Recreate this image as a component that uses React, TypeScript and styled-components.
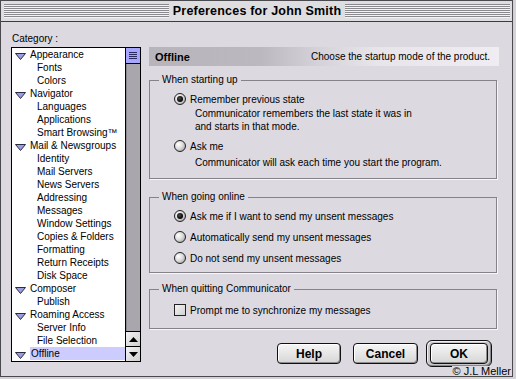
import React from "react";
import styled, { createGlobalStyle, css } from "styled-components";

const GlobalStyle = createGlobalStyle`
  html, body {
    margin: 0;
    padding: 0;
    background: #d4d2d6;
  }
  body {
    font-family: "Liberation Sans", Arial, sans-serif;
    font-size: 10px;
    color: #000;
  }
`;

interface Category {
  label: string;
  parent?: boolean;
  selected?: boolean;
}

const categories: Category[] = [
  { label: "Appearance", parent: true },
  { label: "Fonts" },
  { label: "Colors" },
  { label: "Navigator", parent: true },
  { label: "Languages" },
  { label: "Applications" },
  { label: "Smart Browsing™" },
  { label: "Mail & Newsgroups", parent: true },
  { label: "Identity" },
  { label: "Mail Servers" },
  { label: "News Servers" },
  { label: "Addressing" },
  { label: "Messages" },
  { label: "Window Settings" },
  { label: "Copies & Folders" },
  { label: "Formatting" },
  { label: "Return Receipts" },
  { label: "Disk Space" },
  { label: "Composer", parent: true },
  { label: "Publish" },
  { label: "Roaming Access", parent: true },
  { label: "Server Info" },
  { label: "File Selection" },
  { label: "Offline", parent: true, selected: true },
];

function Disclosure() {
  return (
    <svg width="11" height="7" viewBox="0 0 11 7">
      <polygon points="0.5,0.5 10.5,0.5 5.5,6.5" fill="#9c9ce0" stroke="#2a2a40" strokeWidth="1" />
    </svg>
  );
}

function Arrow({ up }: { up?: boolean }) {
  return (
    <svg width="9" height="5" viewBox="0 0 9 5">
      <polygon points={up ? "0,5 9,5 4.5,0" : "0,0 9,0 4.5,5"} fill="#000" />
    </svg>
  );
}

export default function App() {
  return (
    <>
      <GlobalStyle />
      <Window>
        <TitleBar>
          <Stripes />
          <Title>Preferences for John Smith</Title>
          <Stripes />
        </TitleBar>
        <Body>
          <Sidebar>
            <CategoryLabel>Category :</CategoryLabel>
            <ListBox>
              <ListItems>
                {categories.map((c) => (
                  <Row key={c.label} $parent={c.parent}>
                    {c.parent && <Disclosure />}
                    <RowText $selected={c.selected}>{c.label}</RowText>
                  </Row>
                ))}
              </ListItems>
              <ScrollBar>
                <Thumb>
                  <GripLine />
                  <GripLine />
                  <GripLine />
                  <GripLine />
                </Thumb>
                <Track />
                <ArrowButton>
                  <Arrow up />
                </ArrowButton>
                <ArrowButton>
                  <Arrow />
                </ArrowButton>
              </ScrollBar>
            </ListBox>
          </Sidebar>

          <Main>
            <Header>
              <HeaderTitle>Offline</HeaderTitle>
              <HeaderHint>Choose the startup mode of the product.</HeaderHint>
            </Header>

            <Group $top={8} $pt={6} $pb={9}>
              <Legend>When starting up</Legend>
              <Option>
                <Radio $on />
                <span>Remember previous state</span>
              </Option>
              <Description $gap={1}>
                Communicator remembers the last state it was in
                <br />
                and starts in that mode.
              </Description>
              <Option $gap={6}>
                <Radio />
                <span>Ask me</span>
              </Option>
              <Description $gap={3}>Communicator will ask each time you start the program.</Description>
            </Group>

            <Group $top={12} $pt={6} $pb={7}>
              <Legend>When going online</Legend>
              <Option>
                <Radio $on />
                <span>Ask me if I want to send my unsent messages</span>
              </Option>
              <Option $gap={7}>
                <Radio />
                <span>Automatically send my unsent messages</span>
              </Option>
              <Option $gap={7}>
                <Radio />
                <span>Do not send my unsent messages</span>
              </Option>
            </Group>

            <Group $top={10} $pt={8} $pb={11}>
              <Legend>When quitting Communicator</Legend>
              <Option>
                <CheckBox />
                <span>Prompt me to synchronize my messages</span>
              </Option>
            </Group>

            <ButtonRow>
              <PushButton $width={64}>Help</PushButton>
              <PushButton $width={65}>Cancel</PushButton>
              <DefaultRing>
                <PushButton $width={58}>OK</PushButton>
              </DefaultRing>
            </ButtonRow>
          </Main>
        </Body>
        <Credit>© J.L Meller</Credit>
      </Window>
    </>
  );
}

const Window = styled.div`
  position: relative;
  width: 513px;
  height: 377px;
  box-sizing: border-box;
  border: 1px solid #4a4a4e;
  background: #dcd9e1;
  overflow: hidden;
`;

const TitleBar = styled.div`
  height: 20px;
  display: flex;
  align-items: center;
  gap: 4px;
  padding: 0 2px 0 3px;
  background: #dedde0;
  border-bottom: 1px solid #3c3c40;
`;

const Stripes = styled.div`
  flex: 1;
  height: 14px;
  background: repeating-linear-gradient(
    to bottom,
    #8a8a8e 0px,
    #8a8a8e 1px,
    #f4f4f4 1px,
    #f4f4f4 2px
  );
`;

const Title = styled.div`
  font-family: "Liberation Sans", Arial, sans-serif;
  font-weight: bold;
  font-size: 12.5px;
  letter-spacing: 0.2px;
  white-space: nowrap;
`;

const Body = styled.div`
  display: grid;
  grid-template-columns: 130px 350px;
  column-gap: 8px;
  padding: 11px 0 0 10px;
`;

const Sidebar = styled.div`
  display: flex;
  flex-direction: column;
`;

const CategoryLabel = styled.div`
  height: 12px;
  line-height: 12px;
  margin-bottom: 2px;
  padding-left: 1px;
`;

const ListBox = styled.div`
  display: flex;
  height: 315px;
  box-sizing: border-box;
  border: 1px solid #000;
  background: #fff;
`;

const ListItems = styled.div`
  flex: 1;
  display: flex;
  flex-direction: column;
`;

const Row = styled.div<{ $parent?: boolean }>`
  height: 13px;
  display: flex;
  align-items: center;
  gap: 4px;
  padding-left: ${(p) => (p.$parent ? "3px" : "25px")};
  white-space: nowrap;

  svg {
    margin-top: 3px;
    flex: none;
  }
`;

const RowText = styled.span<{ $selected?: boolean }>`
  line-height: 13px;
  ${(p) =>
    p.$selected &&
    css`
      flex: 1;
      background: #ccccff;
      padding-left: 1px;
    `}
`;

const ScrollBar = styled.div`
  width: 14px;
  display: flex;
  flex-direction: column;
  border-left: 1px solid #000;
  background: #aaa6ae;
`;

const Thumb = styled.div`
  height: 16px;
  box-sizing: border-box;
  border-bottom: 1px solid #000;
  background: #a6a6ff;
  display: flex;
  flex-direction: column;
  justify-content: center;
  gap: 1px;
  padding: 0 3px;
`;

const GripLine = styled.div`
  height: 1px;
  background: #2a2a60;
`;

const Track = styled.div`
  flex: 1;
  box-shadow: inset 1px 0 0 #8d8991;
`;

const ArrowButton = styled.div`
  height: 15px;
  box-sizing: border-box;
  border-top: 1px solid #000;
  background: linear-gradient(135deg, #f2f2f2, #cfcfcf);
  display: flex;
  align-items: center;
  justify-content: center;
`;

const Main = styled.div`
  display: flex;
  flex-direction: column;
  margin-top: 14px;
`;

const Header = styled.div`
  height: 19px;
  display: flex;
  align-items: center;
  justify-content: space-between;
  padding: 0 9px 0 6px;
  background: linear-gradient(
    90deg,
    #b8b4bc 0%,
    #bcb8c0 32%,
    #d4d1d8 48%,
    #e8e5ea 65%,
    #efedf1 100%
  );
`;

const HeaderTitle = styled.span`
  font-weight: bold;
  font-size: 11px;
`;

const HeaderHint = styled.span`
  font-size: 10px;
`;

const Group = styled.fieldset<{ $top: number; $pt: number; $pb: number }>`
  margin: ${(p) => p.$top}px 2px 0 0;
  padding: ${(p) => p.$pt}px 0 ${(p) => p.$pb}px 24px;
  border: 1px solid #85828a;
  box-shadow: 1px 1px 0 #f6f5f8;
  min-width: 0;
  display: flex;
  flex-direction: column;
`;

const Legend = styled.legend`
  margin-left: -15px;
  padding: 0 3px;
  height: 12px;
  line-height: 12px;
`;

const Option = styled.div<{ $gap?: number }>`
  display: flex;
  align-items: center;
  gap: 4px;
  height: 14px;
  margin-top: ${(p) => p.$gap ?? 0}px;
`;

const Description = styled.div<{ $gap?: number }>`
  padding-left: 21px;
  line-height: 13px;
  margin-top: ${(p) => p.$gap ?? 0}px;
`;

const Radio = styled.span<{ $on?: boolean }>`
  position: relative;
  width: 12px;
  height: 12px;
  box-sizing: border-box;
  border-radius: 50%;
  border: 1px solid #222;
  background: radial-gradient(circle at 35% 35%, #ffffff 0%, #dcdcdc 45%, #8e8e8e 100%);
  flex: none;

  ${(p) =>
    p.$on &&
    css`
      &::after {
        content: "";
        position: absolute;
        inset: 2px;
        border-radius: 50%;
        background: radial-gradient(circle at 40% 40%, #4a4a4a 0%, #000 70%);
      }
    `}
`;

const CheckBox = styled.span`
  width: 12px;
  height: 12px;
  box-sizing: border-box;
  border: 1px solid #222;
  background: linear-gradient(135deg, #f4f4f4, #d0d0d0);
  flex: none;
`;

const ButtonRow = styled.div`
  display: flex;
  justify-content: flex-end;
  align-items: center;
  gap: 12px;
  margin-top: 11px;
  padding-right: 7px;
`;

const PushButton = styled.button<{ $width: number }>`
  width: ${(p) => p.$width}px;
  height: 21px;
  box-sizing: border-box;
  padding: 0;
  border: 1px solid #111;
  border-radius: 4px;
  background: linear-gradient(to bottom, #f6f6f6, #d6d6d6);
  box-shadow: inset -1px -1px 0 #8e8e8e, inset 1px 1px 0 #ffffff;
  font-family: "Liberation Sans", Arial, sans-serif;
  font-weight: bold;
  font-size: 12px;
  color: #000;
`;

const DefaultRing = styled.div`
  margin-left: -4px;
  padding: 2px 3px;
  border: 1px solid #111;
  border-radius: 6px;
  background: #c8c6ca;
  box-shadow: inset 1px 1px 0 #f0f0f0, inset -1px -1px 0 #888;
  display: flex;
`;

const Credit = styled.div`
  position: absolute;
  right: 0;
  bottom: -1px;
  padding: 0 1px;
  font-size: 11px;
  line-height: 11px;
  background: #dcd9e1;
`;
